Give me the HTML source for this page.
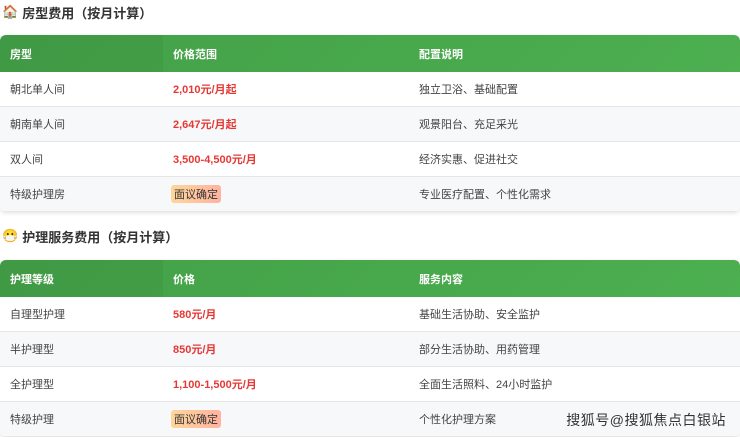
<!DOCTYPE html>
<html><head><meta charset="utf-8"><style>
*{margin:0;padding:0;box-sizing:border-box}
body{width:740px;height:436px;overflow:hidden;background:#fff;font-family:"Liberation Sans","Noto Sans CJK SC",sans-serif;color:#444;position:relative}
h3{position:absolute;left:2px;font-size:13px;font-weight:bold;color:#333;display:flex;align-items:center;gap:4px;height:20px}
.t{position:absolute;left:0;width:740px;border-radius:6px;overflow:hidden;box-shadow:0 1px 4px rgba(0,0,0,.12)}
.r{display:flex;align-items:center;font-size:11px}
.r div{padding-left:10px}
.c1{width:163px}.c2{width:246px}.c3{flex:1}
.h{height:37px;background:linear-gradient(135deg,#43a047,#4caf50);color:#fff;font-weight:bold}
.h .c1{background:rgba(0,0,0,.04);height:100%;display:flex;align-items:center}
.r.b{height:35px;border-bottom:1px solid #e6e6e6}
.r.b:nth-child(odd){background:#f7f8fa}
.p{color:#e53935;font-weight:bold}
.tag{display:inline-block;background:linear-gradient(90deg,#ffd699,#ffb3a0);color:#333;padding:1px 3px;border-radius:3px;margin-left:-2px}
.wm{position:absolute;right:14px;top:410px;font-size:14px;color:#333;text-shadow:0 0 2px #fff;letter-spacing:.5px}
</style></head><body>
<h3 style="top:2px"><span style="font-size:13px">🏠</span>房型费用（按月计算）</h3>
<div class="t" style="top:35px">
<div class="r h"><div class="c1">房型</div><div class="c2">价格范围</div><div class="c3">配置说明</div></div>
<div class="r b"><div class="c1">朝北单人间</div><div class="c2 p">2,010元/月起</div><div class="c3">独立卫浴、基础配置</div></div>
<div class="r b"><div class="c1">朝南单人间</div><div class="c2 p">2,647元/月起</div><div class="c3">观景阳台、充足采光</div></div>
<div class="r b"><div class="c1">双人间</div><div class="c2 p">3,500-4,500元/月</div><div class="c3">经济实惠、促进社交</div></div>
<div class="r b"><div class="c1">特级护理房</div><div class="c2"><span class="tag">面议确定</span></div><div class="c3">专业医疗配置、个性化需求</div></div>
</div>
<h3 style="top:226px"><span style="font-size:13px">😷</span>护理服务费用（按月计算）</h3>
<div class="t" style="top:260px">
<div class="r h"><div class="c1">护理等级</div><div class="c2">价格</div><div class="c3">服务内容</div></div>
<div class="r b"><div class="c1">自理型护理</div><div class="c2 p">580元/月</div><div class="c3">基础生活协助、安全监护</div></div>
<div class="r b"><div class="c1">半护理型</div><div class="c2 p">850元/月</div><div class="c3">部分生活协助、用药管理</div></div>
<div class="r b"><div class="c1">全护理型</div><div class="c2 p">1,100-1,500元/月</div><div class="c3">全面生活照料、24小时监护</div></div>
<div class="r b"><div class="c1">特级护理</div><div class="c2"><span class="tag">面议确定</span></div><div class="c3">个性化护理方案</div></div>
</div>
<div class="wm">搜狐号@搜狐焦点白银站</div>
</body></html>
